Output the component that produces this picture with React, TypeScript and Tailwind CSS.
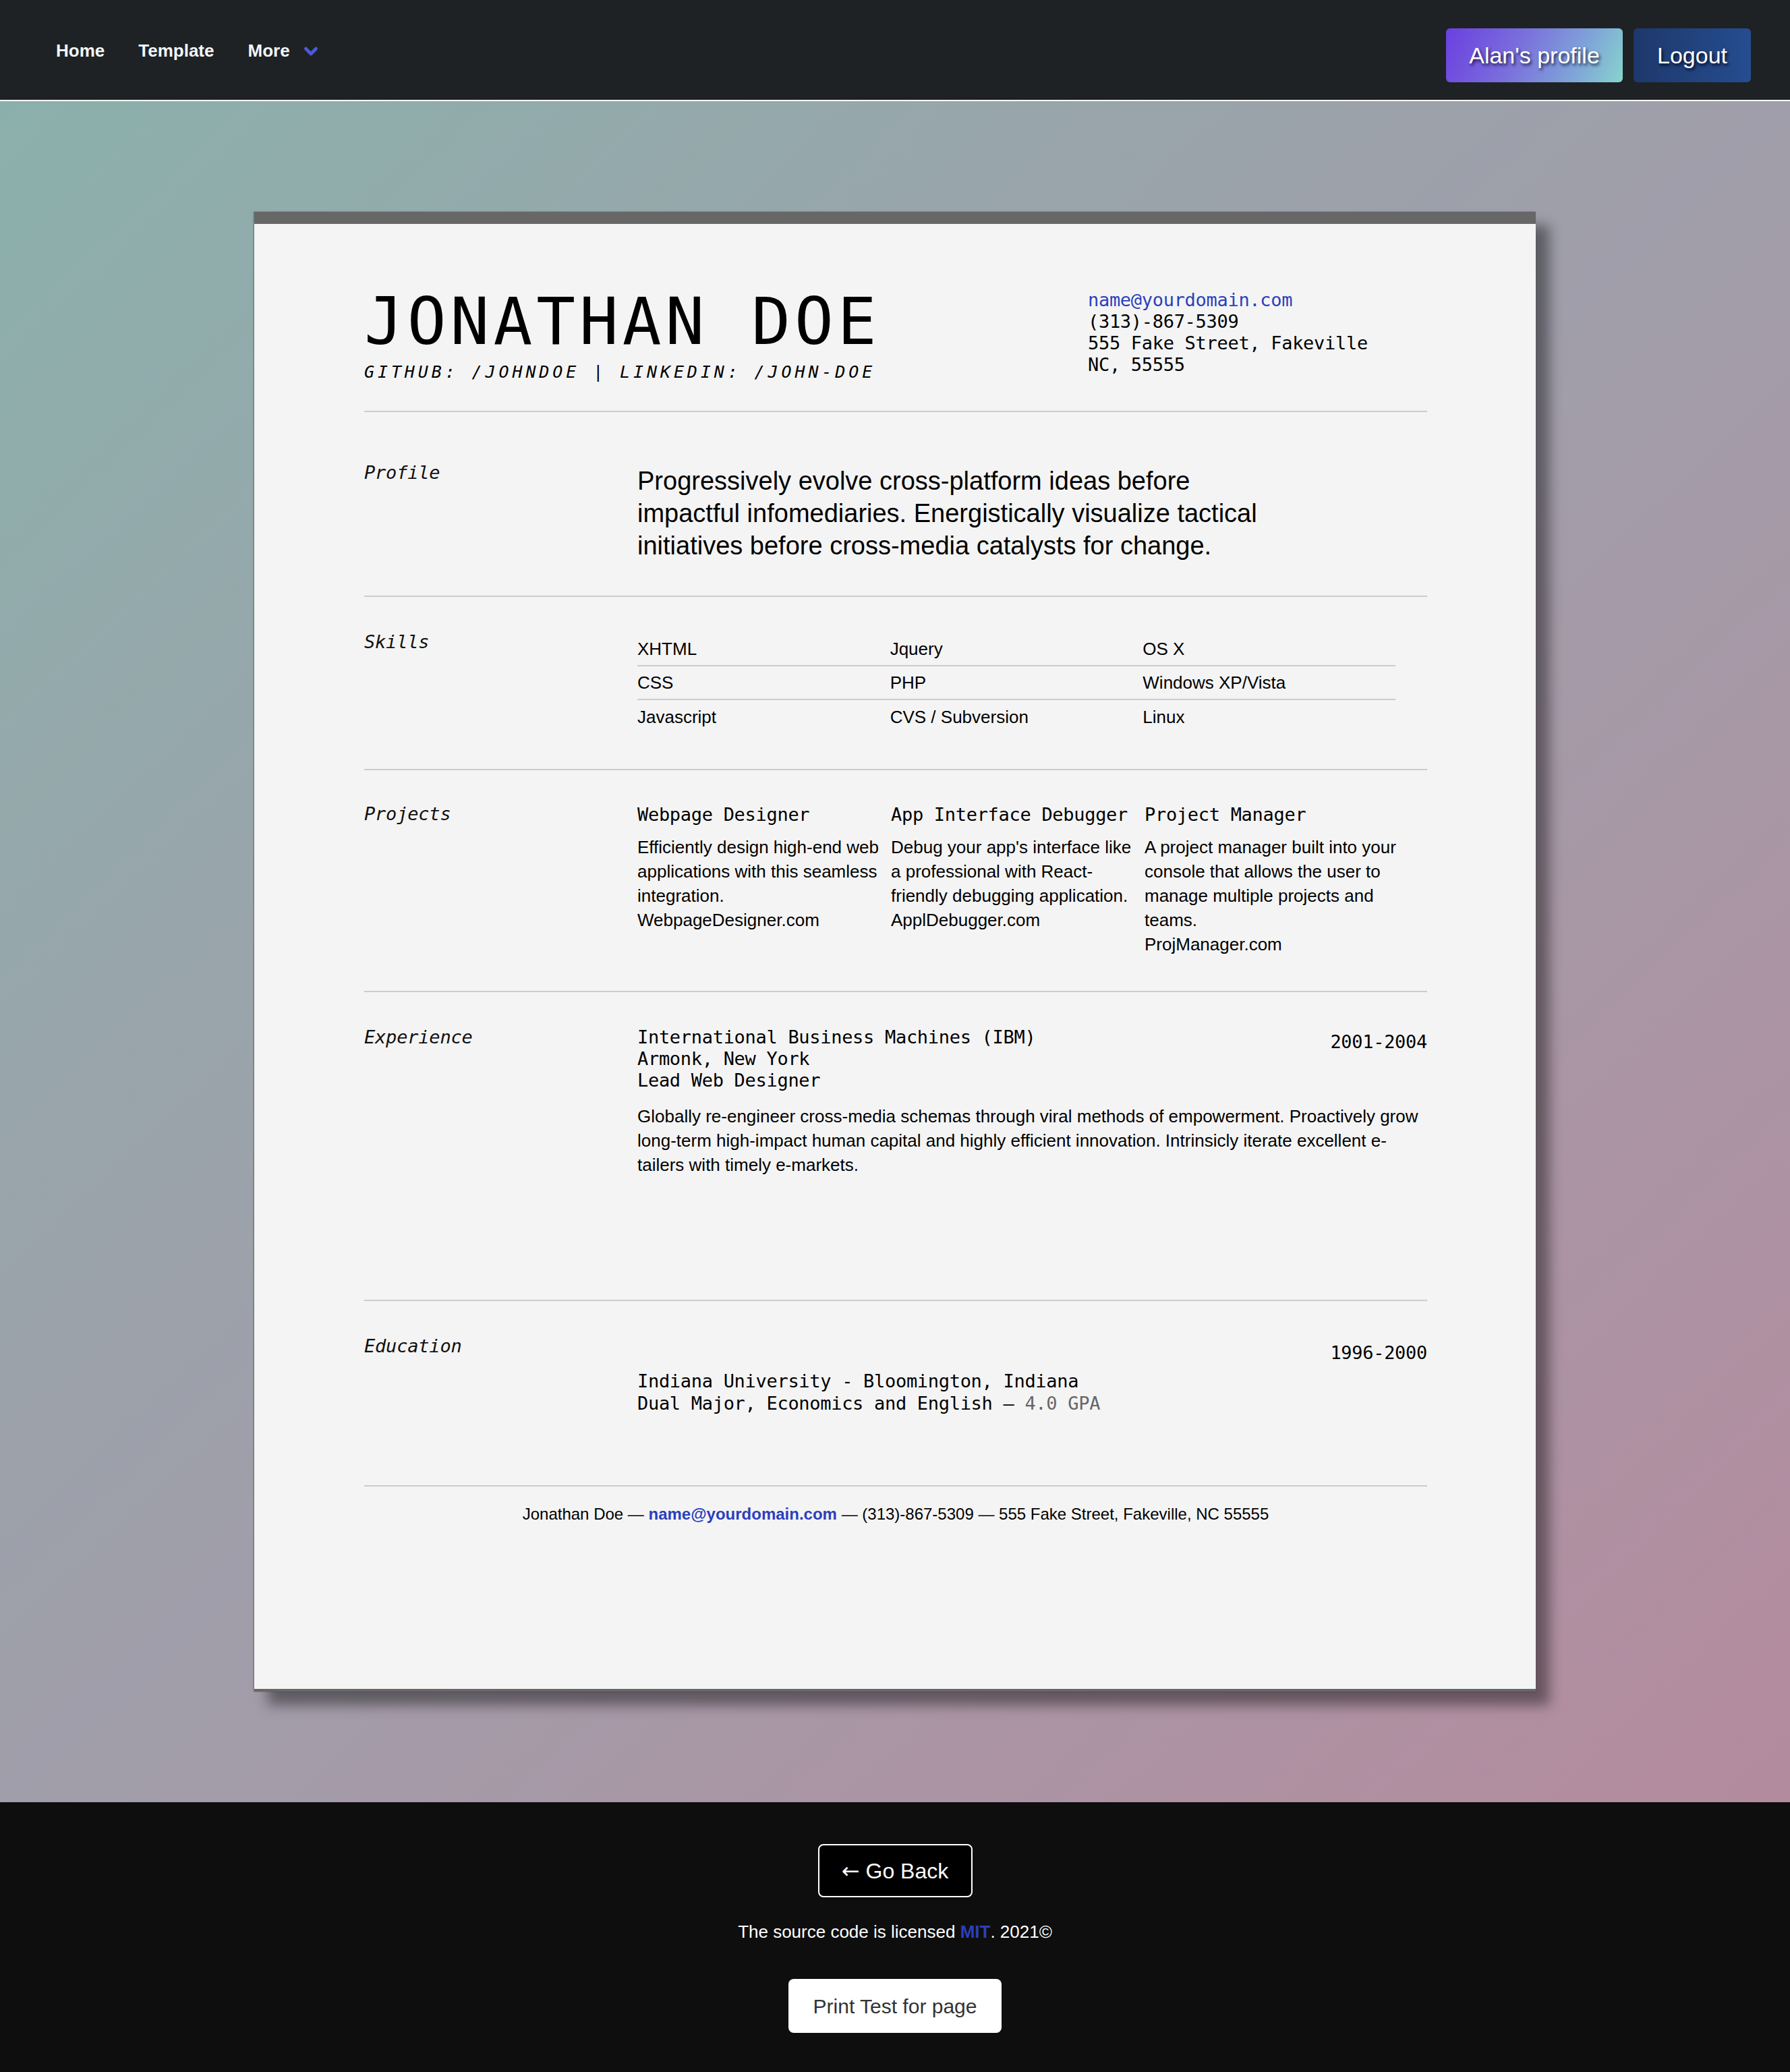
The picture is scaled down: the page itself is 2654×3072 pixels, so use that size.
import { ChevronDown } from 'lucide-react'

const skills = [
  ['XHTML', 'Jquery', 'OS X'],
  ['CSS', 'PHP', 'Windows XP/Vista'],
  ['Javascript', 'CVS / Subversion', 'Linux'],
]

const projects = [
  {
    title: 'Webpage Designer',
    text: 'Efficiently design high-end web applications with this seamless integration.',
    site: 'WebpageDesigner.com',
  },
  {
    title: 'App Interface Debugger',
    text: "Debug your app's interface like a professional with React-friendly debugging application.",
    site: 'ApplDebugger.com',
  },
  {
    title: 'Project Manager',
    text: 'A project manager built into your console that allows the user to manage multiple projects and teams.',
    site: 'ProjManager.com',
  },
]

function Label({ children }: { children: string }) {
  return (
    <div className="w-[405px] shrink-0 font-['DejaVu_Sans_Mono',monospace] italic text-[27px] leading-[32px] tracking-[-0.2px] text-[#111]">
      {children}
    </div>
  )
}

export default function App() {
  return (
    <div className="min-h-[3072px] font-['Liberation_Sans',Arial,sans-serif]">
      {/* Nav */}
      <nav className="h-[150px] bg-[#1e2224] border-b-2 border-white flex items-center justify-between pl-[83px] pr-[58px]">
        <div className="flex items-center gap-[50px] mt-[3px] text-[26px] font-bold text-[#f3f6fa]">
          <a>Home</a>
          <a>Template</a>
          <a className="flex items-center gap-[16px]">
            More
            <ChevronDown className="w-[30px] h-[30px] text-[#4a5bd4]" strokeWidth={4} />
          </a>
        </div>
        <div className="flex items-center gap-[16px] mt-[16px] text-[34px] text-white">
          <button className="w-[262px] h-[80px] rounded-[6px] bg-[linear-gradient(115deg,#6b3fe0_0%,#7a6fdc_40%,#7fa6d8_75%,#88d4cc_100%)] [text-shadow:2px_3px_4px_rgba(0,0,30,0.75)]">
            Alan's profile
          </button>
          <button className="w-[174px] h-[80px] rounded-[6px] bg-gradient-to-r from-[#1e386c] to-[#254d8f] [text-shadow:2px_3px_4px_rgba(0,0,20,0.85)]">
            Logout
          </button>
        </div>
      </nav>

      {/* Resume */}
      <main className="bg-gradient-to-br from-[#8bb0ac] via-[#a09eaa] to-[#b48b9e] pt-[164px] pb-[164px]">
        <div className="mx-auto w-[1900px] bg-[#f4f4f4] border-t-[18px] border-b-4 border-[#676767] pl-[163px] pr-[161px] pb-[243px] shadow-[20px_20px_18px_rgba(0,0,0,0.42),-1px_0_2px_rgba(0,0,0,0.35)] text-[#111]">
          {/* Header */}
          <div className="flex items-start pt-[97px] pb-[42px] border-b-2 border-[#cccccc]">
            <div className="font-['DejaVu_Sans_Mono',monospace] text-black">
              <h1 className="text-[96px] leading-[96px] tracking-[6px]">JONATHAN DOE</h1>
              <div className="mt-[12px] italic text-[25px] leading-[30px] tracking-[4.9px]">
                GITHUB: /JOHNDOE | LINKEDIN: /JOHN-DOE
              </div>
            </div>
            <div className="ml-auto w-[503px] font-['DejaVu_Sans_Mono',monospace] text-[27px] leading-[32px] tracking-[-0.3px] text-black">
              <a className="block text-[#2b3fbd]">name@yourdomain.com</a>
              <div>(313)-867-5309</div>
              <div>555 Fake Street, Fakeville</div>
              <div>NC, 55555</div>
            </div>
          </div>

          {/* Profile */}
          <section className="flex pt-[74px] pb-[50px] border-b-2 border-[#cccccc]">
            <Label>Profile</Label>
            <p className="mt-[4px] max-w-[950px] text-[38px] leading-[48px] text-black">
              Progressively evolve cross-platform ideas before impactful infomediaries. Energistically visualize tactical initiatives before cross-media catalysts for change.
            </p>
          </section>

          {/* Skills */}
          <section className="flex pt-[51px] pb-[52px] border-b-2 border-[#cccccc]">
            <Label>Skills</Label>
            <div className="mt-[2px] w-[1124px] text-[26px] text-black">
              {skills.map((row, i) => (
                <div
                  key={i}
                  className={`grid grid-cols-3 h-[50px] items-center ${i < 2 ? 'border-b-2 border-[#cccccc]' : 'h-[48px]'}`}
                >
                  {row.map((s) => (
                    <div key={s}>{s}</div>
                  ))}
                </div>
              ))}
            </div>
          </section>

          {/* Projects */}
          <section className="flex pt-[49px] pb-[51px] border-b-2 border-[#cccccc]">
            <Label>Projects</Label>
            <div className="mt-[1px] w-[1128px] grid grid-cols-3">
              {projects.map((p) => (
                <div key={p.title}>
                  <div className="font-['DejaVu_Sans_Mono',monospace] text-[27px] leading-[32px] tracking-[-0.3px] text-black">{p.title}</div>
                  <p className="mt-[14px] text-[26px] leading-[36px] text-black">
                    {p.text}
                    <br />
                    {p.site}
                  </p>
                </div>
              ))}
            </div>
          </section>

          {/* Experience */}
          <section className="flex pt-[51px] pb-[182px] border-b-2 border-[#cccccc]">
            <Label>Experience</Label>
            <div className="flex-1">
              <div className="flex justify-between font-['DejaVu_Sans_Mono',monospace] text-[27px] leading-[32px] tracking-[-0.3px] text-black">
                <div>
                  <div>International Business Machines (IBM)</div>
                  <div>Armonk, New York</div>
                  <div>Lead Web Designer</div>
                </div>
                <div className="mt-[7px]">2001-2004</div>
              </div>
              <p className="mt-[19px] text-[26px] leading-[36px] text-black">
                Globally re-engineer cross-media schemas through viral methods of empowerment. Proactively grow long-term high-impact human capital and highly efficient innovation. Intrinsicly iterate excellent e-tailers with timely e-markets.
              </p>
            </div>
          </section>

          {/* Education */}
          <section className="flex pt-[51px] pb-[105px] border-b-2 border-[#cccccc]">
            <Label>Education</Label>
            <div className="flex-1 font-['DejaVu_Sans_Mono',monospace] text-[27px] tracking-[-0.3px] text-black">
              <div className="mt-[10px] leading-[32px] text-right">1996-2000</div>
              <div className="mt-[9px] leading-[33px]">
                <div>Indiana University - Bloomington, Indiana</div>
                <div>
                  Dual Major, Economics and English — <span className="text-[#666]">4.0 GPA</span>
                </div>
              </div>
            </div>
          </section>

          {/* Card footer */}
          <div className="pt-[25px] text-center text-[24px] leading-[32px] text-black">
            Jonathan Doe — <a className="font-bold text-[#2b3fbd]">name@yourdomain.com</a> — (313)-867-5309 — 555 Fake Street, Fakeville, NC 55555
          </div>
        </div>
      </main>

      {/* Page footer */}
      <footer className="h-[402px] bg-[#0e0e0e] flex flex-col items-center pt-[62px]">
        <button className="w-[229px] h-[79px] rounded-[8px] border-2 border-white bg-black text-white text-[32px]">
          <span className="font-['DejaVu_Sans',sans-serif]">←</span> Go Back
        </button>
        <p className="mt-[36px] text-[26px] leading-[30px] text-white">
          The source code is licensed <a className="font-bold text-[#2b3fbd]">MIT</a>. 2021©
        </p>
        <button className="mt-[55px] w-[316px] h-[80px] rounded-[8px] bg-white text-[#333] text-[30px]">
          Print Test for page
        </button>
      </footer>
    </div>
  )
}
